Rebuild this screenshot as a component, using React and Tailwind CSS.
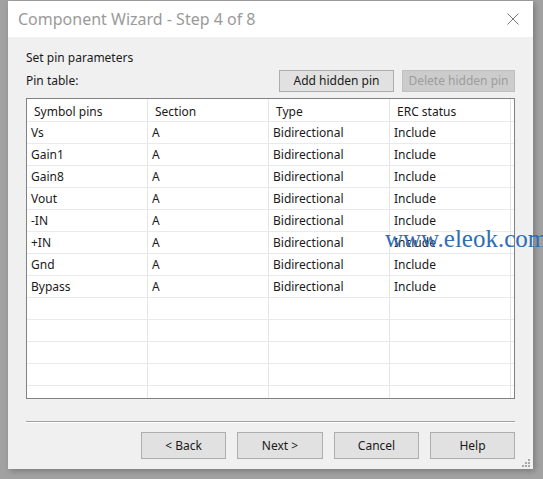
import React from 'react';

const pins = [
  ['Vs', 'A', 'Bidirectional', 'Include'],
  ['Gain1', 'A', 'Bidirectional', 'Include'],
  ['Gain8', 'A', 'Bidirectional', 'Include'],
  ['Vout', 'A', 'Bidirectional', 'Include'],
  ['-IN', 'A', 'Bidirectional', 'Include'],
  ['+IN', 'A', 'Bidirectional', 'Include'],
  ['Gnd', 'A', 'Bidirectional', 'Include'],
  ['Bypass', 'A', 'Bidirectional', 'Include'],
  ['', '', '', ''],
  ['', '', '', ''],
  ['', '', '', ''],
  ['', '', '', ''],
  ['', '', '', ''],
];

const font = { fontFamily: '"Noto Sans", "Open Sans", sans-serif' };

function Btn({ children, disabled, className = '' }) {
  return (
    <div
      className={`flex items-center justify-center border text-[12px] ${
        disabled ? 'bg-[#cccccc] border-[#bfbfbf] text-[#9c9c9c]' : 'bg-[#e1e1e1] border-[#adadad] text-[#1a1a1a]'
      } ${className}`}
    >
      {children}
    </div>
  );
}

export default function App() {
  return (
    <div className="w-[543px] h-[479px] bg-[#a2a2a2] pl-[8px] pt-[1px] relative overflow-hidden" style={font}>
      <div className="w-[525px] h-[468px] bg-[#f0f0f0] flex flex-col shadow-[2px_2px_6px_rgba(0,0,0,0.25)]">
        {/* Title bar */}
        <div className="h-[36px] bg-white flex items-center justify-between pl-[10px] pr-[14px]">
          <span className="text-[16px] text-[#9a9a9a]">Component Wizard - Step 4 of 8</span>
          <svg width="12" height="12" viewBox="0 0 12 12" className="text-[#777]">
            <path d="M0.5 0.5L11.5 11.5M11.5 0.5L0.5 11.5" stroke="currentColor" strokeWidth="1" />
          </svg>
        </div>

        <div className="flex-1 flex flex-col px-[18px] pt-[13px] text-[12px] text-[#1a1a1a]">
          <div className="h-[16px] leading-[16px]">Set pin parameters</div>
          <div className="flex items-center justify-between mt-[4px]">
            <span>Pin table:</span>
            <div className="flex gap-[8px]">
              <Btn className="w-[115px] h-[22px]">Add hidden pin</Btn>
              <Btn disabled className="w-[113px] h-[22px]">Delete hidden pin</Btn>
            </div>
          </div>

          {/* Pin table */}
          <div className="mt-[6px] w-[489px] h-[301px] border border-[#828282] bg-white overflow-hidden">
            <div className="flex h-[22px]">
              {['Symbol pins', 'Section', 'Type', 'ERC status'].map((h) => (
                <div key={h} className="w-[121px] h-full flex items-center pl-[7px] pt-[3px] border-r border-[#e5e5e5]">
                  {h}
                </div>
              ))}
            </div>
            {pins.map((row, i) => (
              <div key={i} className="flex h-[22px] border-t border-[#eaeaea]">
                {row.map((c, j) => (
                  <div key={j} className="w-[121px] h-full flex items-center pl-[4px] border-r border-[#e5e5e5]">
                    {c}
                  </div>
                ))}
              </div>
            ))}
          </div>

          <div className="mt-[22px] h-[2px] border-t border-[#a0a0a0] border-b border-b-white w-[489px]" />

          <div className="flex justify-end gap-[11px] mt-[9px]">
            <Btn className="w-[85px] h-[27px]">&lt; Back</Btn>
            <Btn className="w-[86px] h-[27px]">Next &gt;</Btn>
            <Btn className="w-[85px] h-[27px]">Cancel</Btn>
            <Btn className="w-[85px] h-[27px]">Help</Btn>
          </div>
        </div>
      </div>

      {/* resize grip */}
      <div className="absolute left-[522px] top-[459px] grid grid-cols-3 gap-[1px]">
        {[0, 0, 1, 0, 1, 1, 1, 1, 1].map((v, i) => (
          <div key={i} className={`w-[2px] h-[2px] ${v ? 'bg-[#a8a8a8]' : ''}`} />
        ))}
      </div>

      {/* watermark */}
      <div
        className="absolute left-[385px] top-[226px] text-[25px] text-[#2f6db8] leading-none whitespace-nowrap"
        style={{ fontFamily: '"Liberation Serif", serif' }}
      >
        www.eleok.com
      </div>
    </div>
  );
}
